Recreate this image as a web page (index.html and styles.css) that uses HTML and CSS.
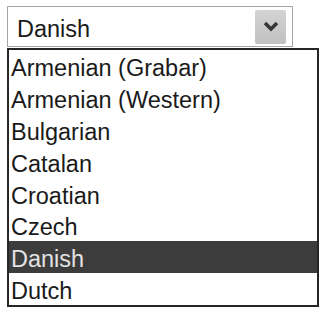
FILE: index.html
```html
<!DOCTYPE html>
<html>
<head>
<meta charset="utf-8">
<link rel="stylesheet" href="styles.css">
</head>
<body>
<div class="combo">
  <span class="combo-text">Danish</span>
  <span class="combo-btn">
    <svg width="16" height="11" viewBox="0 0 16 11"><path d="M2 2 L8 8 L14 2" fill="none" stroke="#383838" stroke-width="3.6"/></svg>
  </span>
</div>
<ul class="list">
  <li class="item">Armenian (Grabar)</li>
  <li class="item">Armenian (Western)</li>
  <li class="item">Bulgarian</li>
  <li class="item">Catalan</li>
  <li class="item">Croatian</li>
  <li class="item">Czech</li>
  <li class="item selected">Danish</li>
  <li class="item">Dutch</li>
</ul>
</body>
</html>
```
FILE: styles.css
```css
html, body {
  margin: 0;
  padding: 0;
  background: #ffffff;
}
body {
  font-family: "Liberation Sans", Arial, sans-serif;
  font-size: 23.5px;
  color: #1a1a1a;
}
.combo {
  box-sizing: border-box;
  margin: 6px 0 0 7px;
  width: 286px;
  height: 41px;
  border: 1px solid #a6a6a6;
  display: flex;
  align-items: center;
  justify-content: space-between;
  padding: 2px 6px 2px 9px;
}
.combo-text {
  line-height: 26px;
  padding-top: 5px;
}
.combo-btn {
  width: 31px;
  height: 34px;
  background: linear-gradient(#d4d4d4, #c0c0c0);
  border-radius: 2px;
  display: flex;
  align-items: center;
  justify-content: center;
}
.list {
  list-style: none;
  box-sizing: border-box;
  margin: 1px 0 0 7px;
  padding: 0;
  width: 312px;
  height: 259px;
  border: 2px solid #262626;
}
.item {
  box-sizing: border-box;
  height: 31.875px;
  line-height: 26px;
  padding: 5px 0 0 2px;
  white-space: nowrap;
}
.selected {
  background: #3c3c3c;
  color: #e2e2e2;
}
```
